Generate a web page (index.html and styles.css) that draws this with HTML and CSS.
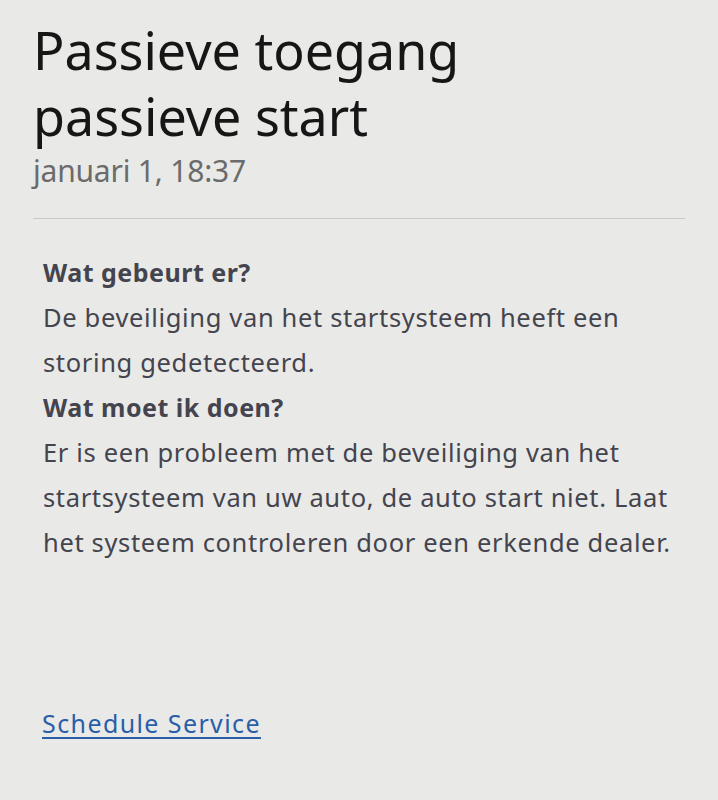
FILE: index.html
```html
<!DOCTYPE html>
<html>
<head>
<meta charset="utf-8">
<link rel="stylesheet" href="styles.css">
</head>
<body>
<div class="page">
  <header class="head">
    <h1 class="title">Passieve toegang passieve start</h1>
    <div class="date">januari 1, 18:37</div>
  </header>
  <div class="rule"></div>
  <section class="content">
    <p class="q">Wat gebeurt er?</p>
    <p class="a">De beveiliging van het startsysteem heeft een storing gedetecteerd.</p>
    <p class="q">Wat moet ik doen?</p>
    <p class="a">Er is een probleem met de beveiliging van het startsysteem van uw auto, de auto start niet. Laat het systeem controleren door een erkende dealer.</p>
  </section>
  <a class="link" href="#">Schedule Service</a>
</div>
</body>
</html>
```
FILE: styles.css
```css
html, body {
  margin: 0;
  padding: 0;
  background: #e9e9e7;
}
body {
  font-family: "Noto Sans", "Open Sans", sans-serif;
  width: 718px;
  height: 800px;
  overflow: hidden;
}
.page {
  padding: 17px 33px 0 33px;
  display: flex;
  flex-direction: column;
}
.title {
  margin: 0;
  font-weight: 400;
  font-size: 52px;
  line-height: 66px;
  color: #161616;
  width: 480px;
}
.date {
  font-size: 30px;
  line-height: 40px;
  letter-spacing: -0.2px;
  color: #6b6b6b;
  margin-top: 2px;
}
.rule {
  height: 1px;
  background: #c9c9c7;
  margin-top: 27px;
  width: 652px;
}
.content {
  padding: 31px 0 0 10px;
  margin-right: -25px;
}
.content p {
  margin: 0;
  font-size: 25.5px;
  line-height: 45px;
  color: #44444e;
}
.content .a {
  letter-spacing: 0.65px;
}
.content .q {
  font-weight: 700;
  font-size: 25px;
  letter-spacing: 0.5px;
}
.link {
  margin: 141px 0 0 9px;
  align-self: flex-start;
  font-size: 25px;
  line-height: 34px;
  letter-spacing: 1.4px;
  color: #2a5ea8;
  text-decoration: underline;
  text-underline-offset: 4px;
  text-decoration-thickness: 2px;
}
```
